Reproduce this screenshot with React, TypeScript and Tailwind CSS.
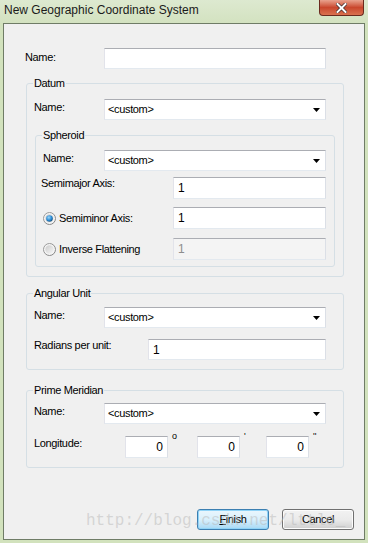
import React from "react";

const font = "font-['Liberation_Sans',Arial,sans-serif]";
const label = "text-[11px] leading-[13px] tracking-[-0.35px] text-black";
const boxBorder =
  "border border-t-[#abadb3] border-l-[#e2e3ea] border-r-[#dbdfe6] border-b-[#e3e9ef]";

const TextBox = ({
  width,
  value,
  disabled,
  right,
  height = "h-[22px]",
}: {
  width: string;
  value?: string;
  disabled?: boolean;
  right?: boolean;
  height?: string;
}) => (
  <div
    className={`${width} ${height} ${boxBorder} flex items-center text-[12px] ${
      right ? "justify-end pr-[4px]" : "pl-[4px]"
    } ${disabled ? "bg-[#f4f4f4] text-[#8d8d8d] border-[#adb2b5]" : "bg-white text-black"}`}
  >
    {value}
  </div>
);

const Combo = () => (
  <div
    className={`w-[222px] h-[21px] ${boxBorder} bg-white flex items-center justify-between pl-[3px] pr-[5px] ${label}`}
  >
    <span>&lt;custom&gt;</span>
    <svg width="7" height="4" viewBox="0 0 7 4">
      <path d="M0 0h7L3.5 4z" fill="#000" />
    </svg>
  </div>
);

const Radio = ({ checked }: { checked?: boolean }) => (
  <svg width="13" height="13" viewBox="0 0 13 13">
    <defs>
      <linearGradient id="ring" x1="0" y1="0" x2="1" y2="1">
        <stop offset="0" stopColor="#a0a0a0" />
        <stop offset="1" stopColor="#808080" />
      </linearGradient>
      <linearGradient id="face" x1="0" y1="0" x2="1" y2="1">
        <stop offset="0" stopColor="#cbcbcb" />
        <stop offset="1" stopColor="#f7f7f7" />
      </linearGradient>
      <radialGradient id="dot" cx="0.4" cy="0.35" r="0.7">
        <stop offset="0" stopColor="#9cd6f7" />
        <stop offset="0.6" stopColor="#2a8ad4" />
        <stop offset="1" stopColor="#17496f" />
      </radialGradient>
    </defs>
    <circle cx="6.5" cy="6.5" r="6" fill="#f4f4f4" stroke="url(#ring)" />
    <circle cx="6.5" cy="6.5" r="4.2" fill="url(#face)" />
    {checked && <circle cx="6.5" cy="6.5" r="3.3" fill="url(#dot)" />}
  </svg>
);

const Group = ({
  title,
  width,
  className,
  children,
}: {
  title: string;
  width: string;
  className: string;
  children: React.ReactNode;
}) => (
  <fieldset
    className={`${width} ${className} border border-[#d5dfe5] rounded-[3px] flex flex-col`}
  >
    <legend className={`ml-[6px] px-[1px] ${label}`}>{title}</legend>
    {children}
  </fieldset>
);

export default function App() {
  return (
    <div
      className={`${font} relative w-[368px] h-[543px] flex flex-col bg-[#d2e2bd] overflow-hidden`}
    >
      {/* title bar */}
      <div className="h-[23px] flex items-start justify-between bg-gradient-to-b from-[#dde9d0] to-[#d3e2c0]">
        <span className="pl-[4px] pt-[3px] text-[12px] leading-[15px] text-[#1a1a1a]">
          New Geographic Coordinate System
        </span>
        <div className="mr-[4px] w-[45px] h-[16px] rounded-b-[4px] border border-t-0 border-[#6b2a1e] bg-gradient-to-b from-[#e8a28e] via-[#c9472d] to-[#d9714f] flex items-center justify-center">
          <svg width="11" height="10" viewBox="0 0 11 10">
            <path
              d="M1.5 1l8 8M9.5 1l-8 8"
              stroke="#3b2a2a"
              strokeWidth="3.4"
              strokeLinecap="square"
            />
            <path
              d="M1.5 1l8 8M9.5 1l-8 8"
              stroke="#fff"
              strokeWidth="2"
              strokeLinecap="square"
            />
          </svg>
        </div>
      </div>

      {/* client area */}
      <div className="ml-[3px] w-[362px] h-[517px] border border-[#6f7c66] bg-[#f0f0f0] flex flex-col">
        <div className="mt-[24px] flex items-start">
          <span className={`ml-[21px] w-[79px] pt-[3px] ${label}`}>Name:</span>
          <TextBox width="w-[222px]" height="h-[21px]" />
        </div>

        <Group title="Datum" width="w-[318px]" className="ml-[22px] mt-[8px] pb-[9px]">
          <div className="mt-[9px] flex items-start">
            <span className={`ml-[7px] w-[70px] pt-[2px] ${label}`}>Name:</span>
            <Combo />
          </div>

          <Group title="Spheroid" width="w-[300px]" className="ml-[8px] mt-[9px] pb-[6px]">
            <div className="mt-[8px] flex items-start">
              <span className={`ml-[7px] w-[61px] pt-[2px] ${label}`}>Name:</span>
              <Combo />
            </div>
            <div className="mt-[6px] flex items-start">
              <span className={`ml-[5px] w-[132px] ${label}`}>Semimajor Axis:</span>
              <TextBox width="w-[153px]" value="1" />
            </div>
            <div className="mt-[8px] flex items-center">
              <div className="ml-[7px] w-[130px] flex items-center gap-[3px]">
                <Radio checked />
                <span className={label}>Semiminor Axis:</span>
              </div>
              <TextBox width="w-[153px]" value="1" />
            </div>
            <div className="mt-[9px] flex items-center">
              <div className="ml-[7px] w-[130px] flex items-center gap-[3px]">
                <Radio />
                <span className={label}>Inverse Flattening</span>
              </div>
              <TextBox width="w-[153px]" value="1" disabled />
            </div>
          </Group>
        </Group>

        <Group title="Angular Unit" width="w-[318px]" className="ml-[22px] mt-[10px] pb-[9px]">
          <div className="mt-[7px] flex items-start">
            <span className={`ml-[7px] w-[70px] pt-[2px] ${label}`}>Name:</span>
            <Combo />
          </div>
          <div className="mt-[11px] flex items-start">
            <span className={`ml-[7px] w-[114px] ${label}`}>Radians per unit:</span>
            <TextBox width="w-[178px]" height="h-[21px]" value="1" />
          </div>
        </Group>

        <Group title="Prime Meridian" width="w-[318px]" className="ml-[22px] mt-[14px] pb-[9px]">
          <div className="mt-[6px] flex items-start">
            <span className={`ml-[7px] w-[70px] pt-[2px] ${label}`}>Name:</span>
            <Combo />
          </div>
          <div className="mt-[12px] flex items-start">
            <span className={`ml-[7px] w-[91px] pt-[1px] ${label}`}>Longitude:</span>
            <TextBox width="w-[43px]" value="0" right />
            <span className="w-[29px] pl-[4px] -mt-[5px] text-[9px] leading-[10px]">o</span>
            <TextBox width="w-[43px]" value="0" right />
            <span className="w-[26px] pl-[4px] -mt-[5px] text-[9px] leading-[10px]">'</span>
            <TextBox width="w-[43px]" value="0" right />
            <span className="pl-[4px] -mt-[5px] text-[9px] leading-[10px]">''</span>
          </div>
        </Group>

        <div className="mt-auto pb-[9px] pr-[10px] flex justify-end gap-[13px]">
          <button className="w-[72px] h-[21px] rounded-[3px] border border-[#3c7fb1] bg-gradient-to-b from-[#eaf6fd] via-[#d9f0fc] to-[#a7d9f5] shadow-[inset_0_0_0_1px_#8fd3f7] text-[11px] tracking-[-0.35px] text-black">
            <span className="underline underline-offset-[1px]">F</span>inish
          </button>
          <button className="w-[72px] h-[21px] rounded-[3px] border border-[#707070] bg-gradient-to-b from-[#f2f2f2] via-[#ebebeb] to-[#cfcfcf] shadow-[inset_0_0_0_1px_#fcfcfc] text-[11px] tracking-[-0.35px] text-black">
            Cancel
          </button>
        </div>
      </div>

      {/* watermark */}
      <span className="absolute left-[86px] top-[511px] font-['Liberation_Mono',monospace] text-[16px] leading-[20px] text-[#b8b8b8]/50 pointer-events-none">
        http://blog.csdn.net/lttlo_
      </span>
    </div>
  );
}
